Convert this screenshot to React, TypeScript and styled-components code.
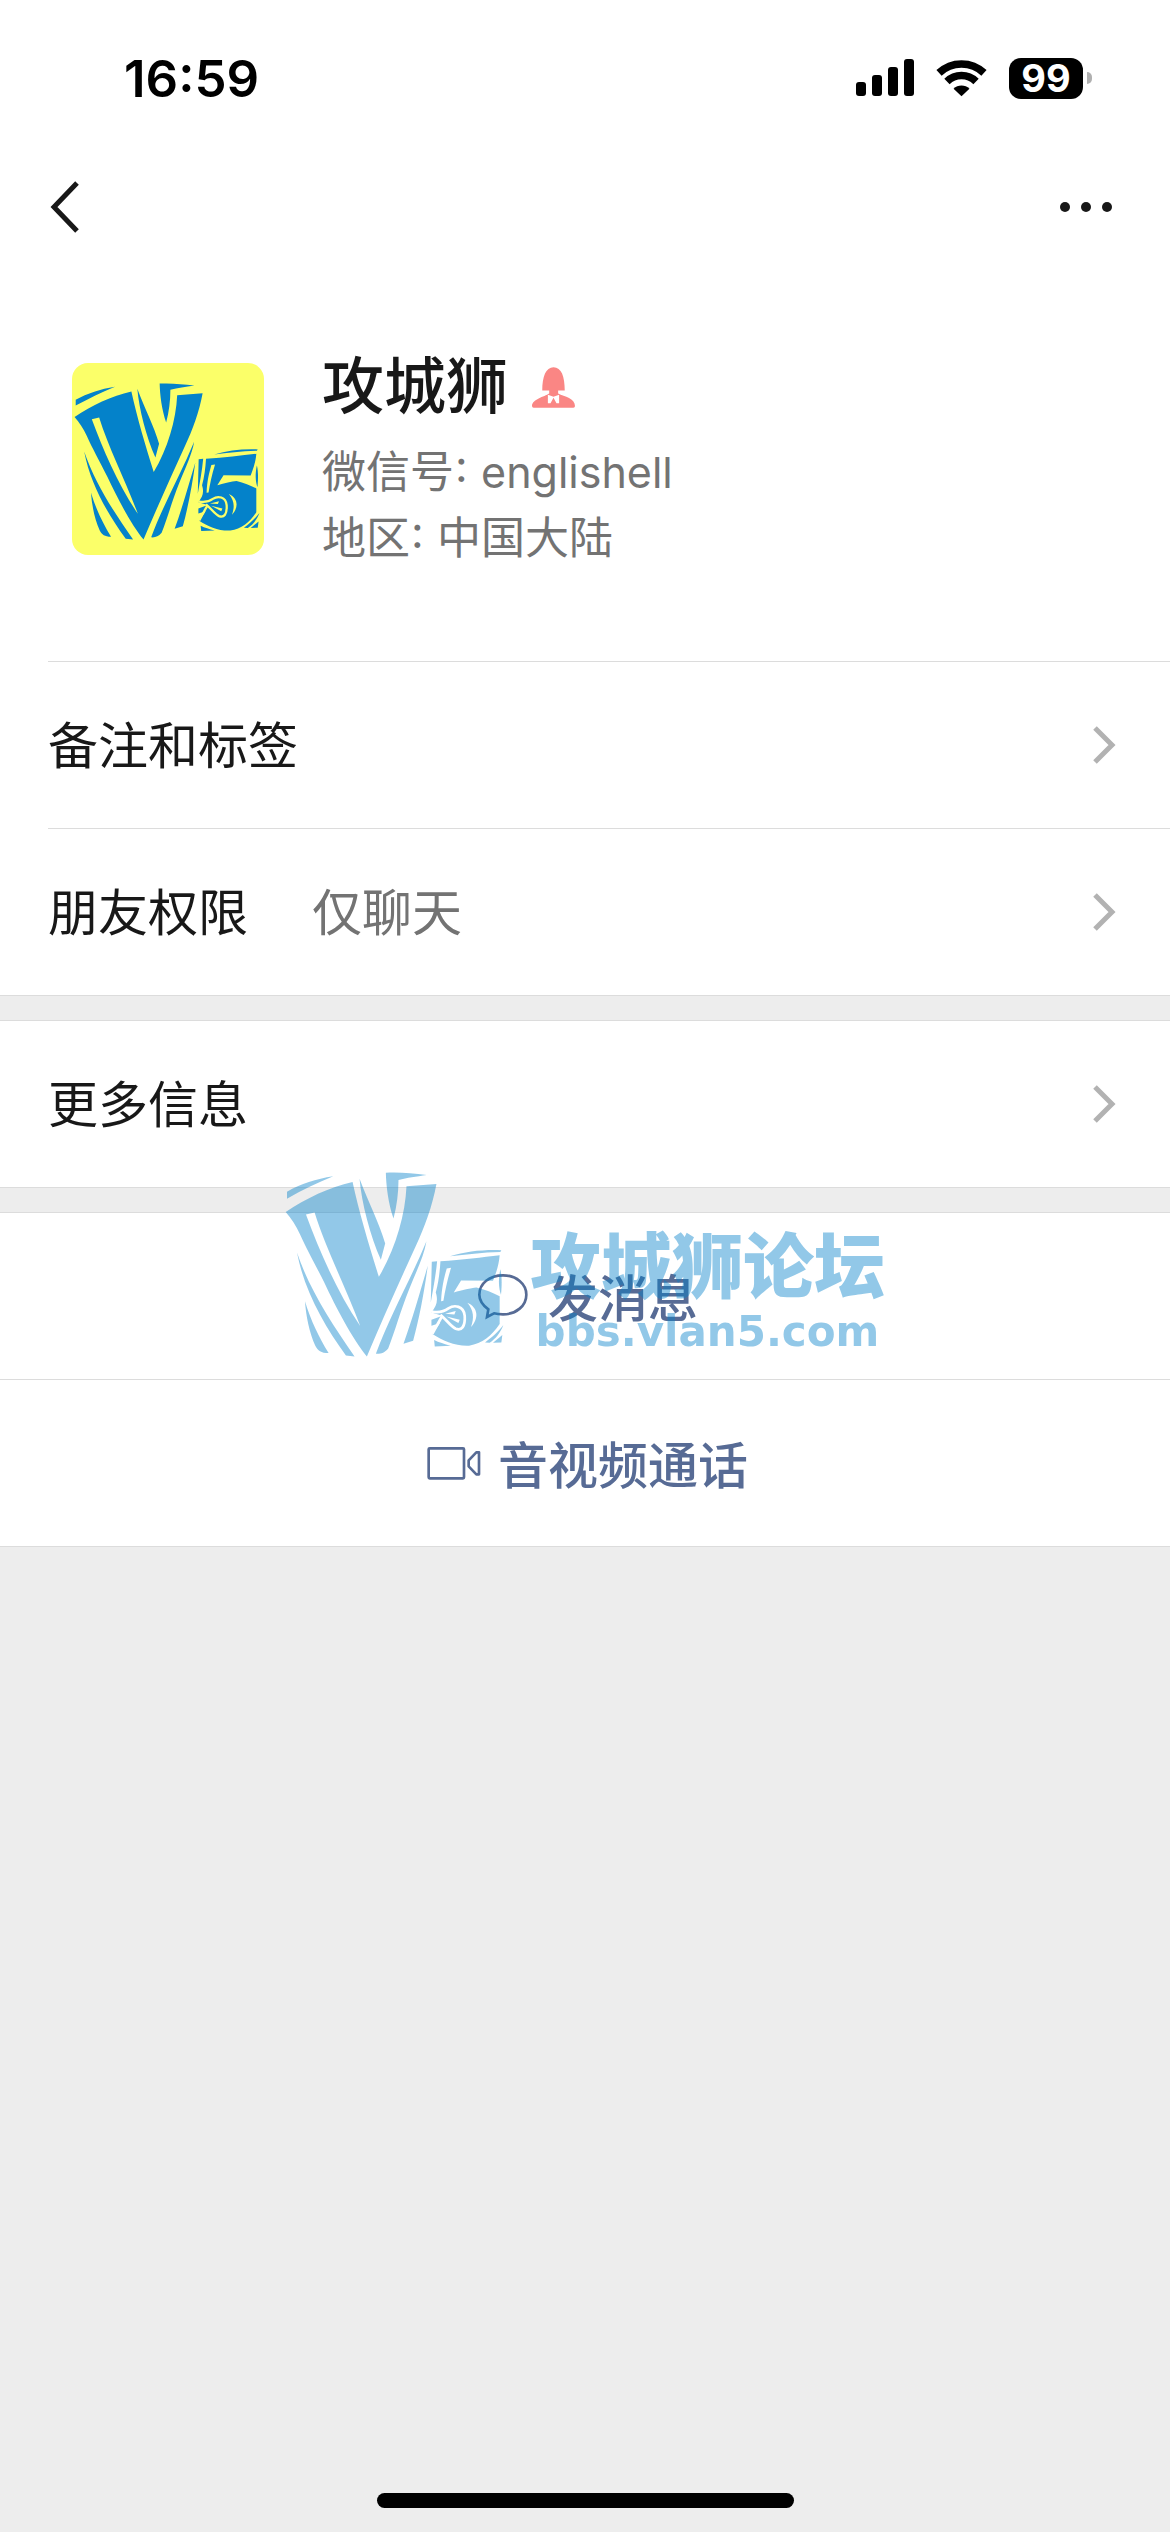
import React, { useId } from 'react';
import styled, { createGlobalStyle } from 'styled-components';

const colors = {
  text: '#181818',
  secondary: '#737373',
  link: '#576b95',
  line: '#dcdcdc',
  background: '#ededed',
  chevron: '#b2b2b2',
  brand: '#0482ca',
};

const GlobalStyle = createGlobalStyle`
  * {
    box-sizing: border-box;
  }

  body {
    margin: 0;
    background-color: ${colors.background};
    color: ${colors.text};
    font-family: Inter, 'Noto Sans CJK SC', sans-serif;
  }

  svg {
    display: block;
    flex: none;
  }
`;

const Page = styled.div`
  display: flex;
  flex-direction: column;
  min-height: 100vh;
`;

const Top = styled.header`
  background-color: #fff;
`;

const StatusBar = styled.div`
  display: flex;
  align-items: center;
  justify-content: space-between;
  height: 156px;
  padding: 0 78px 0 124px;
  color: #000;
`;

const Time = styled.time`
  font-size: 51px;
  font-weight: 600;
`;

const StatusIcons = styled.div`
  display: flex;
  align-items: center;
  gap: 22px;
`;

const Battery = styled.div`
  display: flex;
  align-items: center;
  gap: 4px;
`;

const BatteryLevel = styled.span`
  width: 74px;
  border-radius: 12px;
  background-color: #000;
  color: #fff;
  font-size: 38px;
  font-weight: 700;
  line-height: 41px;
  text-align: center;
`;

const BatteryCap = styled.span`
  width: 5px;
  height: 12px;
  border-radius: 0 6px 6px 0;
  background-color: #b0b0b0;
`;

const NavBar = styled.nav`
  display: flex;
  align-items: center;
  justify-content: space-between;
  height: 102px;
  padding: 0 48px;
`;

const IconButton = styled.button`
  padding: 0;
  border: none;
  background: none;
  color: ${colors.text};
  cursor: pointer;
`;

const Profile = styled.section`
  display: flex;
  align-items: center;
  gap: 58px;
  padding: 89px 72px 90px;
  background-color: #fff;
`;

const Avatar = styled.div`
  flex: none;
  width: 192px;
  height: 192px;
  padding: 20px 4px 0 2px;
  border-radius: 16px;
  background-color: #fbff69;
`;

const NameRow = styled.div`
  display: flex;
  align-items: center;
  gap: 24px;
  margin-bottom: 12px;
`;

const Name = styled.h1`
  margin: 0;
  font-size: 62px;
  font-weight: 500;
  line-height: 80px;
`;

const Detail = styled.p`
  margin: 0;
  color: ${colors.secondary};
  font-size: 44px;
  line-height: 66px;
`;

// Latin colons sit too low between Chinese characters
const Colon = styled.span`
  margin: 0 1px;
  line-height: 1;
  vertical-align: 6px;
`;

const Account = styled.span`
  font-size: 43px;
`;

const Group = styled.section`
  position: relative;
  margin-bottom: 24px;
  border-bottom: 1px solid ${colors.line};
  background-color: #fff;
`;

const Row = styled.button<{ $inset?: boolean }>`
  display: flex;
  align-items: center;
  width: ${({ $inset }) => ($inset ? 'calc(100% - 48px)' : '100%')};
  height: 167px;
  margin-left: ${({ $inset }) => ($inset ? '48px' : '0')};
  padding: 0 54px 0 ${({ $inset }) => ($inset ? '0' : '48px')};
  border: none;
  border-top: 1px solid ${colors.line};
  background: none;
  color: ${colors.text};
  font-family: inherit;
  font-size: 50px;
  text-align: left;
  cursor: pointer;
`;

const RowLabel = styled.span`
  padding-bottom: 6px;
`;

const RowValue = styled(RowLabel)`
  margin-left: 64px;
  color: ${colors.secondary};
`;

const RowChevron = styled.svg`
  margin-left: auto;
`;

const ActionRow = styled(Row)`
  justify-content: center;
  gap: 16px;
  padding: 0;
  color: ${colors.link};
  font-weight: 500;
`;

const ActionLabel = styled.span`
  padding-bottom: 2px;
`;

const Watermark = styled.div`
  position: absolute;
  top: -40px;
  left: 0;
  right: 0;
  z-index: 1;
  display: flex;
  align-items: flex-start;
  justify-content: center;
  gap: 26px;
  color: ${colors.brand};
  opacity: 0.43;
  pointer-events: none;
`;

const WatermarkText = styled.div`
  padding-top: 58px;
`;

const WatermarkName = styled.div`
  font-size: 71px;
  font-weight: 900;
  line-height: 72px;
`;

const WatermarkUrl = styled.div`
  font-family: 'DejaVu Sans', sans-serif;
  font-size: 42px;
  font-weight: 700;
  line-height: 60px;
  text-align: center;
`;

const HomeIndicator = styled.div`
  width: 417px;
  height: 15px;
  margin: auto auto 24px;
  border-radius: 8px;
  background-color: #000;
`;

const Logo = ({ width }: { width: number }) => {
  const maskId = useId();

  return (
    <svg width={width} viewBox="47 68 658 556" fill={colors.brand} aria-hidden="true">
      <mask id={maskId} maskUnits="userSpaceOnUse" x="47" y="68" width="658" height="556">
        <rect x="47" y="68" width="658" height="556" fill="#fff" />
        <path d="M110 196 L136 190 C166 290 232 420 273 531 C205 430 152 310 110 196Z" fill="#000" />
        <path d="M533 358 L546 356 C535 390 528 425 523 455 L516 456 C518 415 525 385 533 358Z" fill="#000" />
        <path
          d="M487 487 C510 492 524 488 538 478 C556 466 584 470 587 500 C589 532 578 546 560 539 C545 532 532 512 514 497 M490 554 C500 535 508 520 520 500"
          fill="none"
          stroke="#000"
          strokeWidth="8"
        />
        <path d="M528 494 L560 486 L556 496Z M532 502 L572 512 L568 522Z" fill="#000" />
        <path d="M595 461 C628 476 630 508 606 534 C616 505 614 484 595 461Z" fill="#000" />
      </mask>
      <g mask={`url(#${maskId})`}>
        <path d="M53 127 C95 104 140 89 192 81 C145 100 100 122 53 148Z" />
        <path d="M49 188 C110 147 180 114 250 98 C270 190 300 290 329 383 C378 300 408 200 412 111 L502 104 C490 170 466 235 440 290 C390 400 340 510 293 622 C250 570 200 475 165 400 C135 340 112 300 92 255 C80 228 66 208 49 188Z" />
        <path d="M271 88 C298 160 330 220 348 283 L335 332 C303 260 277 160 271 88Z" />
        <path d="M350 70 C395 68 430 72 473 77 C440 82 415 85 388 92 C388 130 383 170 373 208 C357 160 351 110 350 70Z" />
        <path d="M83 310 C120 420 185 520 256 622 L230 619 C165 530 105 425 83 310Z" />
        <path d="M107 456 C125 515 148 562 178 612 C155 612 146 605 138 590 C120 550 110 500 107 456Z" />
        <path d="M472 276 C465 320 440 370 420 420 C394 485 378 545 357 598 C345 612 335 615 320 614 C362 500 425 390 472 276Z" />
        <path d="M476 350 C465 430 450 510 432 575 L403 584 C430 510 455 420 476 350Z" />
        <path d="M488 338 L504 336 C500 380 492 420 485 460Z" />
        <path d="M543 321 C590 307 640 301 697 303 L694 308 C640 309 590 316 543 321Z" />
        <path d="M514 336 C580 332 640 324 692 318 C690 345 682 370 672 395 L576 394 L554 430 C580 422 605 417 622 415 C648 421 672 431 692 441 L692 525 C668 560 640 584 600 590 C560 592 520 575 490 555 L513 522 L487 530 L487 512 L520 500 L487 490 C502 470 508 455 500 430 C508 400 512 370 514 336Z" />
        <path d="M495 573 C510 580 525 585 545 590 L497 592Z" />
        <path d="M703 528 C690 545 670 565 648 580 L662 581 C680 570 695 550 703 528Z" />
        <path d="M700 558 L672 581 L697 580Z" />
        <path d="M694 360 C700 385 698 415 696 437 C688 415 688 385 694 360Z" />
      </g>
    </svg>
  );
};

const Signal = () => (
  <svg width="58" height="38" viewBox="0 0 58 38" aria-hidden="true">
    <rect x="0" y="23" width="10" height="14" rx="3" />
    <rect x="16" y="16" width="10" height="21" rx="3" />
    <rect x="32" y="8" width="10" height="29" rx="3" />
    <rect x="48" y="0" width="10" height="37" rx="3" />
  </svg>
);

const Wifi = () => (
  <svg width="51" height="38" viewBox="408 175 154 115" aria-hidden="true">
    <g fill="none" stroke="currentColor" strokeWidth="23">
      <path d="M417 217 A99 99 0 0 1 553 217" />
      <path d="M441 243 A63 63 0 0 1 529 243" />
    </g>
    <path d="M485 288 L461 265 A34 34 0 0 1 509 265Z" />
  </svg>
);

const Person = () => (
  <svg width="43" height="41" viewBox="698 106 130 124" role="img" aria-label="女">
    <path
      fill="#fa8684"
      d="M729 177 C729 135 740 107 763 107 C787 107 797 135 797 177 L777 177 L777 186 C797 196 828 200 828 224 Q828 229 823 229 L703 229 Q698 229 698 224 C698 203 735 196 750 186 L750 177Z"
    />
    <path fill="#fff" d="M746 190 L763 196 L780 190 L780 216 L772 216 L763 199 L754 216 L746 216Z" />
  </svg>
);

const Chevron = () => (
  <RowChevron width="24" height="40" viewBox="0 0 24 40" fill="none" aria-hidden="true">
    <path d="M3 3 L20 20 L3 37" stroke={colors.chevron} strokeWidth="5" />
  </RowChevron>
);

const MessageIcon = () => (
  <svg width="60" height="60" viewBox="601 348 180 180" fill="none" aria-hidden="true">
    <path
      d="M667 490 L646 501 L650 478 C634 466 623 451 623 434 C623 400 654 376 694 376 C734 376 764 402 764 434 C764 467 734 493 694 493 C683 493 674 492 667 490Z"
      stroke="currentColor"
      strokeWidth="8"
    />
  </svg>
);

const VideoIcon = () => (
  <svg width="60" height="60" viewBox="118 161 180 180" fill="none" aria-hidden="true">
    <g stroke="currentColor" strokeWidth="8" strokeLinejoin="round">
      <rect x="138" y="207" width="106" height="90" rx="3" />
      <path d="M289 219 L289 285 L281 285 L258 261 L258 243 L281 219Z" />
    </g>
  </svg>
);

const App = () => (
  <>
    <GlobalStyle />
    <Page>
      <Top>
        <StatusBar>
          <Time>16:59</Time>
          <StatusIcons>
            <Signal />
            <Wifi />
            <Battery>
              <BatteryLevel>99</BatteryLevel>
              <BatteryCap />
            </Battery>
          </StatusIcons>
        </StatusBar>
        <NavBar>
          <IconButton aria-label="返回">
            <svg width="32" height="54" viewBox="0 0 32 54" fill="none">
              <path d="M29 3 L6 27 L29 51" stroke="currentColor" strokeWidth="5" />
            </svg>
          </IconButton>
          <IconButton aria-label="更多">
            <svg width="64" height="12" viewBox="0 0 64 12" fill="currentColor">
              <circle cx="7" cy="6" r="5" />
              <circle cx="28" cy="6" r="5" />
              <circle cx="49" cy="6" r="5" />
            </svg>
          </IconButton>
        </NavBar>
      </Top>
      <Profile>
        <Avatar>
          <Logo width={186} />
        </Avatar>
        <div>
          <NameRow>
            <Name>攻城狮</Name>
            <Person />
          </NameRow>
          <Detail>
            微信号<Colon>:</Colon> <Account>englishell</Account>
          </Detail>
          <Detail>
            地区<Colon>:</Colon> 中国大陆
          </Detail>
        </div>
      </Profile>
      <Group>
        <Row $inset>
          <RowLabel>备注和标签</RowLabel>
          <Chevron />
        </Row>
        <Row $inset>
          <RowLabel>朋友权限</RowLabel>
          <RowValue>仅聊天</RowValue>
          <Chevron />
        </Row>
      </Group>
      <Group>
        <Row>
          <RowLabel>更多信息</RowLabel>
          <Chevron />
        </Row>
      </Group>
      <Group>
        <ActionRow>
          <MessageIcon />
          <ActionLabel>发消息</ActionLabel>
        </ActionRow>
        <ActionRow>
          <VideoIcon />
          <ActionLabel>音视频通话</ActionLabel>
        </ActionRow>
        <Watermark>
          <Logo width={219} />
          <WatermarkText>
            <WatermarkName>攻城狮论坛</WatermarkName>
            <WatermarkUrl>bbs.vlan5.com</WatermarkUrl>
          </WatermarkText>
        </Watermark>
      </Group>
      <HomeIndicator />
    </Page>
  </>
);

export default App;
